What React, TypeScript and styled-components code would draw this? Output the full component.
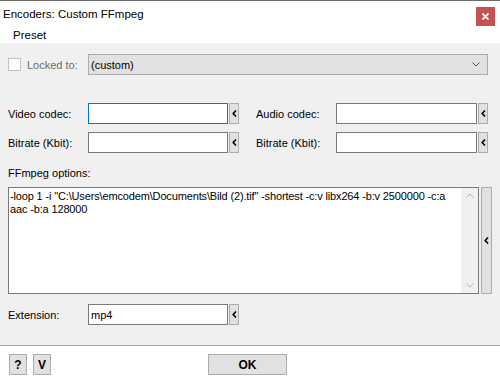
import React from 'react'
import styled, { createGlobalStyle } from 'styled-components'

const GlobalStyle = createGlobalStyle`
  html, body {
    margin: 0;
    padding: 0;
    background: #ffffff;
  }
  body {
    font-family: "Liberation Sans", Arial, sans-serif;
    font-size: 11px;
    color: #000;
  }
`

const Window = styled.div`
  width: 500px;
  height: 380px;
  display: flex;
  flex-direction: column;
  background: #fff;
  border-top: 1px solid #6b6b6b;
  box-sizing: border-box;
  overflow: hidden;
`

const TitleBar = styled.div`
  height: 26px;
  display: flex;
  align-items: center;
  justify-content: space-between;
  padding: 0 5px 0 3px;
  font-size: 11.5px;
`

const CloseButton = styled.div`
  width: 19px;
  height: 19px;
  background: #c75050;
  display: flex;
  align-items: center;
  justify-content: center;
  margin-top: 4px;
`

const MenuBar = styled.div`
  height: 16px;
  display: flex;
  align-items: center;
  padding-left: 13px;
  font-size: 11.5px;
`

const Body = styled.div`
  background: #f0f0f0;
  padding: 11px 8px 20px 8px;
  display: flex;
  flex-direction: column;
  border-bottom: 1px solid #a0a0a0;
  box-shadow: 0 1px 0 #d9d9d9;
`

const LockedRow = styled.div`
  display: flex;
  align-items: center;
  height: 21px;
`

const CheckBox = styled.div`
  width: 11px;
  height: 11px;
  border: 1px solid #c2c2c2;
  background: #fff;
`

const DimLabel = styled.span`
  color: #6d6d6d;
  margin-left: 6px;
  width: 61px;
`

const Combo = styled.div`
  flex: 0 0 400px;
  height: 21px;
  box-sizing: border-box;
  border: 1px solid #adadad;
  background: #e1e1e1;
  display: flex;
  align-items: center;
  justify-content: space-between;
  padding: 0 7px 0 2px;
`

const CodecGrid = styled.div`
  margin-top: 28px;
  display: grid;
  grid-template-columns: 80px 151px 97px 152px;
  row-gap: 8px;
  align-items: center;
`

const Label = styled.span<{ $indent?: number }>`
  padding-left: ${(p) => p.$indent || 0}px;
`

const Field = styled.div`
  display: flex;
  height: 21px;
`

const Input = styled.div<{ $focused?: boolean }>`
  flex: 1;
  box-sizing: border-box;
  border: 1px solid ${(p) => (p.$focused ? '#0078d7' : '#7a7a7a')};
  background: #fff;
  display: flex;
  align-items: center;
  padding-left: 2px;
`

const SmallButton = styled.div`
  width: 10px;
  margin-left: 1px;
  box-sizing: border-box;
  border: 1px solid #adadad;
  background: #e1e1e1;
  display: flex;
  align-items: center;
  justify-content: center;
`

const SectionLabel = styled.div`
  margin-top: 14px;
  line-height: 13px;
`

const OptionsRow = styled.div`
  margin-top: 7px;
  display: flex;
  height: 107px;
`

const TextBox = styled.div`
  width: 471px;
  box-sizing: border-box;
  border: 1px solid #7a7a7a;
  background: #fff;
  display: flex;
`

const TextContent = styled.div`
  flex: 1;
  padding: 2px 4px 0 1px;
  line-height: 13px;
  letter-spacing: -0.15px;
  white-space: nowrap;
  overflow: hidden;
`

const ScrollBar = styled.div`
  width: 17px;
  background: #f0f0f0;
  display: flex;
  flex-direction: column;
  justify-content: space-between;
  align-items: center;
  padding: 5px 0;
`

const SideButton = styled(SmallButton)`
  width: 11px;
  margin-left: 2px;
`

const ExtRow = styled.div`
  margin-top: 10px;
  display: grid;
  grid-template-columns: 80px 151px;
  align-items: center;
`

const Footer = styled.div`
  flex: 1;
  background: #fff;
  display: flex;
  align-items: flex-start;
  padding: 8px 9px 0 9px;
`

const FooterButton = styled.div<{ $width: number; $gap?: number }>`
  width: ${(p) => p.$width}px;
  margin-left: ${(p) => p.$gap || 0}px;
  height: 21px;
  box-sizing: border-box;
  border: 1px solid #adadad;
  background: #e1e1e1;
  display: flex;
  align-items: center;
  justify-content: center;
  font-family: "Liberation Sans", Arial, sans-serif;
  font-weight: bold;
  font-size: 12px;
`

const ArrowLeft = () => (
  <svg width="5" height="7" viewBox="0 0 5 7">
    <path d="M4 0.5 L1.2 3.5 L4 6.5" fill="none" stroke="#000" strokeWidth="1.6" />
  </svg>
)

const Chevron = ({ up, color = '#555' }: { up?: boolean; color?: string }) => (
  <svg width="8" height="5" viewBox="0 0 8 5">
    <path
      d={up ? 'M0.5 4.5 L4 1 L7.5 4.5' : 'M0.5 0.5 L4 4 L7.5 0.5'}
      fill="none"
      stroke={color}
      strokeWidth="1"
    />
  </svg>
)

const App: React.FC = () => {
  return (
    <>
      <GlobalStyle />
      <Window>
        <TitleBar>
          <span>Encoders: Custom FFmpeg</span>
          <CloseButton>
            <svg width="7" height="7" viewBox="0 0 7 7">
              <path d="M0.5 0.5 L6.5 6.5 M6.5 0.5 L0.5 6.5" stroke="#fff" strokeWidth="1.8" />
            </svg>
          </CloseButton>
        </TitleBar>
        <MenuBar>Preset</MenuBar>
        <Body>
          <LockedRow>
            <CheckBox />
            <DimLabel>Locked to:</DimLabel>
            <Combo>
              <span>(custom)</span>
              <Chevron />
            </Combo>
          </LockedRow>

          <CodecGrid>
            <Label>Video codec:</Label>
            <Field>
              <Input $focused />
              <SmallButton>
                <ArrowLeft />
              </SmallButton>
            </Field>
            <Label $indent={17}>Audio codec:</Label>
            <Field>
              <Input />
              <SmallButton>
                <ArrowLeft />
              </SmallButton>
            </Field>

            <Label>Bitrate (Kbit):</Label>
            <Field>
              <Input />
              <SmallButton>
                <ArrowLeft />
              </SmallButton>
            </Field>
            <Label $indent={17}>Bitrate (Kbit):</Label>
            <Field>
              <Input />
              <SmallButton>
                <ArrowLeft />
              </SmallButton>
            </Field>
          </CodecGrid>

          <SectionLabel>FFmpeg options:</SectionLabel>
          <OptionsRow>
            <TextBox>
              <TextContent>
                -loop 1 -i "C:\Users\emcodem\Documents\Bild (2).tif" -shortest -c:v libx264 -b:v 2500000 -c:a
                <br />
                aac -b:a 128000
              </TextContent>
              <ScrollBar>
                <Chevron up color="#b4b4b4" />
                <Chevron color="#b4b4b4" />
              </ScrollBar>
            </TextBox>
            <SideButton>
              <ArrowLeft />
            </SideButton>
          </OptionsRow>

          <ExtRow>
            <Label>Extension:</Label>
            <Field>
              <Input>mp4</Input>
              <SmallButton>
                <ArrowLeft />
              </SmallButton>
            </Field>
          </ExtRow>
        </Body>
        <Footer>
          <FooterButton $width={18}>?</FooterButton>
          <FooterButton $width={18} $gap={6}>V</FooterButton>
          <FooterButton $width={79} $gap={157}>OK</FooterButton>
        </Footer>
      </Window>
    </>
  )
}

export default App
